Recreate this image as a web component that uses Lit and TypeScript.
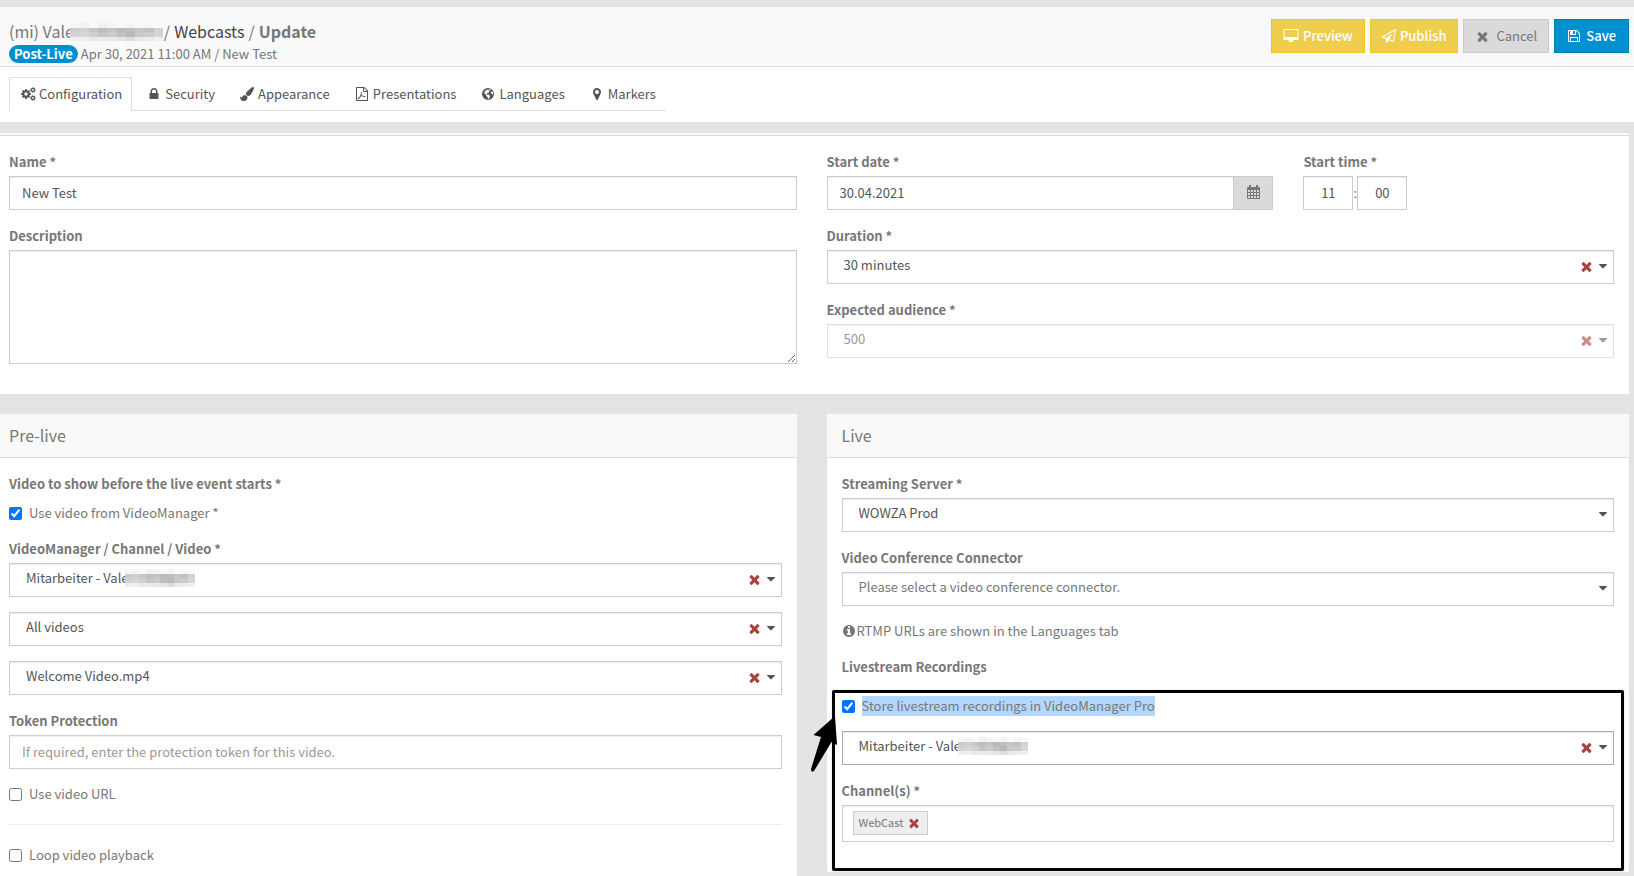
import { LitElement, html, css, svg, nothing } from "lit";
import { customElement, property } from "lit/decorators.js";

/* Builds the outline of a cog wheel with a round hole. */
function gear(cx: number, cy: number, outer: number, inner: number, hole: number, teeth: number): string {
  const step = (Math.PI * 2) / teeth;
  const at = (r: number, a: number) => `${(cx + r * Math.cos(a)).toFixed(1)} ${(cy + r * Math.sin(a)).toFixed(1)}`;
  let d = "";
  for (let i = 0; i < teeth; i++) {
    const a = i * step;
    d += `${i ? "L" : "M"}${at(inner, a - step * 0.32)}L${at(outer, a - step * 0.2)}L${at(outer, a + step * 0.2)}L${at(inner, a + step * 0.32)}`;
  }
  return `${d}ZM${cx + hole} ${cy}a${hole} ${hole} 0 1 0 ${-2 * hole} 0a${hole} ${hole} 0 1 0 ${2 * hole} 0Z`;
}

/* Day cells of the calendar sheet, punched out of its body. */
const dayCells = [5, 8, 11].map((y) => [1, 4, 7, 10].map((x) => `M${x} ${y}h2v2h-2z`).join("")).join("");

const ICONS: Record<string, { box?: string; w?: number; d: string }> = {
  times: {
    d: "M1490 1322q0 40-28 68l-136 136q-28 28-68 28t-68-28l-294-294-294 294q-28 28-68 28t-68-28l-136-136q-28-28-28-68t28-68l294-294-294-294q-28-28-28-68t28-68l136-136q28-28 68-28t68 28l294 294 294-294q28-28 68-28t68 28l136 136q28 28 28 68t-28 68l-294 294 294 294q28 28 28 68z",
  },
  lock: {
    d: "M640 768h512v-192q0-106-75-181t-181-75-181 75-75 181v192zm832 96v576q0 40-28 68t-68 28h-960q-40 0-68-28t-28-68v-576q0-40 28-68t68-28h32v-192q0-184 132-316t316-132 316 132 132 316v192h32q40 0 68 28t28 68z",
  },
  marker: {
    d: "M1152 640q0-106-75-181t-181-75-181 75-75 181 75 181 181 75 181-75 75-181zm256 0q0 109-33 179l-364 774q-16 33-47.5 52t-67.5 19-67.5-19-46.5-52l-365-774q-33-70-33-179 0-212 150-362t362-150 362 150 150 362z",
  },
  plane: {
    d: "M1764 11q33 24 27 64l-256 1536q-5 29-32 45-14 8-31 8-11 0-24-5l-527-215-298 327q-18 21-47 21-14 0-23-4-19-7-30-23.5t-11-36.5v-452l-472-193q-37-14-40-55-3-39 32-59l1664-960q35-21 68 2zm-342 1499l221-1323-1434 827 336 137 863-639-478 797z",
  },
  caret: {
    box: "384 640 1024 640",
    d: "M1408 704q0 26-19 45l-448 448q-19 19-45 19t-45-19l-448-448q-19-19-19-45t19-45 45-19h896q26 0 45 19t19 45z",
  },
  info: {
    d: "M1152 1376v-160q0-14-9-23t-23-9h-96v-512q0-14-9-23t-23-9h-320q-14 0-23 9t-9 23v160q0 14 9 23t23 9h96v320h-96q-14 0-23 9t-9 23v160q0 14 9 23t23 9h448q14 0 23-9t9-23zm-128-896v-160q0-14-9-23t-23-9h-192q-14 0-23 9t-9 23v160q0 14 9 23t23 9h192q14 0 23-9t9-23zm640 416q0 209-103 385.5t-279.5 279.5-385.5 103-385.5-103-279.5-279.5-103-385.5 103-385.5 279.5-279.5 385.5-103 385.5 103 279.5 279.5 103 385.5z",
  },
  floppy: {
    d: "M512 1536h768v-384h-768v384zm896 0h128v-896q0-14-10-38.5t-20-34.5l-281-281q-10-10-34-20t-39-10v416q0 40-28 68t-68 28h-576q-40 0-68-28t-28-68v-416h-128v1280h128v-416q0-40 28-68t68-28h832q40 0 68 28t28 68v416zm-384-928v-320q0-13-9.5-22.5t-22.5-9.5h-192q-13 0-22.5 9.5t-9.5 22.5v320q0 13 9.5 22.5t22.5 9.5h192q13 0 22.5-9.5t9.5-22.5zm640 32v928q0 40-28 68t-68 28h-1344q-40 0-68-28t-28-68v-1344q0-40 28-68t68-28h928q40 0 88 20t76 48l280 280q28 28 48 76t20 88z",
  },
  desktop: {
    box: "-64 0 1920 1792",
    w: 16,
    d: "M1728 992v-832q0-13-9.5-22.5t-22.5-9.5h-1600q-13 0-22.5 9.5t-9.5 22.5v832q0 13 9.5 22.5t22.5 9.5h1600q13 0 22.5-9.5t9.5-22.5zm128-832v1088q0 66-47 113t-113 47h-544q0 37 16 77.5t32 71 16 43.5q0 26-19 45t-45 19h-512q-26 0-45-19t-19-45q0-14 16-44t32-70 16-78h-544q-66 0-113-47t-47-113v-1088q0-66 47-113t113-47h1600q66 0 113 47t47 113z",
  },
  calendar: {
    box: "0 0 13 14",
    w: 13,
    d: `M2 0h2v2h5v-2h2v2h1q1 0 1 1v10q0 1-1 1h-11q-1 0-1-1v-10q0-1 1-1h1z${dayCells}`,
  },
  brush: {
    d: "M1615 0q70 0 122.5 46.5t52.5 116.5q0 63-45 151-332 629-465 752-97 91-218 91-126 0-216.5-92.5t-90.5-219.5q0-128 92-212l638-579q59-54 130-54zm-909 1034q39 76 106.5 130t150.5 76l1 71q4 213-129.5 347t-348.5 134q-123 0-218-46.5t-152.5-127.5-86.5-183-29-220q7 5 41 30t62 44.5 59 36.5 46 17q41 0 55-37 25-66 57.5-112.5t69.5-76 88-47.5 103-25.5 125-10.5z",
  },
  cogs: {
    box: "0 0 1920 1792",
    w: 15,
    d: gear(640, 896, 640, 490, 215, 8) + gear(1530, 384, 360, 270, 115, 7) + gear(1530, 1408, 360, 270, 115, 7),
  },
  pdf: {
    d: "M1596 380q28 28 48 76t20 88v1152q0 40-28 68t-68 28h-1344q-40 0-68-28t-28-68v-1600q0-40 28-68t68-28h896q40 0 88 20t76 48zm-444-244v376h376q-10-29-22-41l-313-313q-12-12-41-22zm384 1528v-1024h-416q-40 0-68-28t-28-68v-416h-768v1536h1280zM780 640q50-20 80 30q25 120-15 270q70 150 180 215q190-30 300 15q70 60 5 115q-130 30-325-60q-170 20-345 80q-140 240-240 275q-90 10-85-70q30-110 225-220q110-190 190-380q-50-190 30-270zM845 1060q-50 120-105 215q120-45 220-60q-75-70-115-155z",
  },
  globe: {
    d: "M896 128a768 768 0 1 0 0 1536a768 768 0 1 0 0-1536zM1040 260q120 20 220 95l-80 70-120-20-60 110 90 60-70 130-150 30-60 110-100 20 30 90 110 30 100-10 170 110 40 130-100 150-60 150-90 60q-70-120-60-290l-150-140-50-160-160-120-70-170q90-220 310-350l150 20 40 50 60-20zM1350 600l110-30q80 120 90 260l-40 150-90-30-50-110-110-60 10-130z",
  },
};

const icon = (name: string, size = 14, cls = "icon") => {
  const i = ICONS[name];
  return html`<svg class=${cls} width=${i.w ?? size} height=${name === "caret" ? 5 : size}
    viewBox=${i.box ?? "0 0 1792 1792"} aria-hidden="true"><path fill="currentColor" fill-rule="evenodd" d=${i.d}></path></svg>`;
};

/* Pixelated strip that hides the rest of a person's name. */
const MOSAIC: string[][] = [
  ["#f6f6f6", "#f2f2f2", "#f8f8f8", "#f1f1f1", "#f5f5f5", "#f8f8f8", "#f4f4f4", "#f9f9f9", "#f6f6f6", "#f9f9f9"],
  ["#cccccc", "#d0d0d0", "#c6c6c6", "#bcbcbc", "#c4c4c4", "#b9b9b9", "#bebebe", "#c6c6c6", "#c0c0c0", "#d2d2d2"],
  ["#d2d2d2", "#d6d6d6", "#d0d0d0", "#c4c4c4", "#cccccc", "#c0c0c0", "#b9b9b9", "#c8c8c8", "#cccccc", "#d6d6d6"],
  ["#eeeeee", "#f0f0f0", "#eaeaea", "#ececec", "#e8e8e8", "#e6e6e6", "#dcdcdc", "#e8e8e8", "#ececec", "#f0f0f0"],
];
const mosaic = (width: number, height: number) => html`<svg class="mosaic" width=${width} height=${height}
  viewBox="0 0 10 4" preserveAspectRatio="none" shape-rendering="crispEdges" aria-hidden="true">
  ${MOSAIC.map((row, y) => row.map((c, x) => svg`<rect x=${x} y=${y} width="1" height="1" fill=${c}></rect>`))}</svg>`;

const shared = css`
  * { box-sizing: border-box; }
  svg { display: block; flex: none; }
  button, input, select, textarea { font: inherit; color: inherit; margin: 0; border-radius: 0; }
`;

@customElement("select-box")
export class SelectBox extends LitElement {
  @property() label = "";
  @property() value = "";
  @property({ type: Boolean }) clearable = false;
  @property({ type: Boolean }) masked = false;
  @property({ type: Boolean, reflect: true }) disabled = false;
  @property({ type: Boolean, reflect: true }) muted = false;
  @property({ type: Boolean, reflect: true }) strong = false;
  @property({ type: Boolean }) hidelabel = false;

  static styles = [shared, css`
    :host { display: block; }
    .label { display: block; font-weight: 700; padding-top: 1px; margin-bottom: 4px; }
    .box {
      position: relative; display: flex; align-items: center; gap: 5px; height: 34px; padding: 0 6px 1px 0;
      border: 1px solid #ccc; background: #fff; box-shadow: inset 0 1px 1px rgba(0, 0, 0, 0.075); color: #555;
    }
    :host([strong]) .box { border-color: #aaa; }
    :host([muted]) .box { color: #777; }
    :host([disabled]) .box { opacity: 0.6; }
    select {
      appearance: none; flex: 1; min-width: 0; height: 31px; padding: 0 0 3px 16px; border: 0;
      background: none; outline: none; opacity: 1;
    }
    .clear { display: flex; padding: 0; border: 0; background: none; color: #a94442; }
    .mask { position: absolute; left: 115px; top: 5px; }
    .caret { color: #555; }
  `];

  render() {
    return html`
      ${this.hidelabel ? nothing : html`<label class="label" for="field">${this.label}</label>`}
      <div class="box">
        <select id="field" aria-label=${this.label} ?disabled=${this.disabled}><option>${this.value}</option></select>
        ${this.masked ? html`<span class="mask">${mosaic(70, 18)}</span>` : nothing}
        ${this.clearable ? html`<button class="clear" aria-label="Clear" ?disabled=${this.disabled}>${icon("times", 15)}</button>` : nothing}
        ${icon("caret", 8, "caret")}
      </div>`;
  }
}

@customElement("app-root")
export class AppRoot extends LitElement {
  static styles = [shared, css`
    :host {
      display: flex; flex-direction: column; min-height: 100vh; overflow: hidden; padding-top: 7px;
      background: #e4e4e4; color: #777;
      font: 13px/20px "Noto Sans CJK SC", "Open Sans", sans-serif;
    }
    .top {
      display: flex; justify-content: space-between; align-items: flex-start; gap: 20px;
      padding: 12px 5px 2px 9px; background: #f9f9f9; border-bottom: 1px solid #ddd;
    }
    .crumbs { display: flex; align-items: center; gap: 4px; margin: 0; font-size: 16px; line-height: 25px; font-weight: 400; }
    .crumbs a { color: #444; text-decoration: none; }
    .crumbs .owner { display: flex; align-items: center; }
    .crumbs .mosaic { margin: 0 -3px 0 -4px; }
    .crumbs strong { font-weight: 700; }
    .meta { display: flex; align-items: center; gap: 3px; }
    .badge { padding: 0 5px; border-radius: 9px; background: #0090d0; color: #fff; font-weight: 700; line-height: 18px; }
    .actions { display: flex; gap: 5px; }
    .btn {
      display: flex; align-items: center; justify-content: center; gap: 4px; height: 34px; padding: 0 11px;
      border: 1px solid #eac62f; background: #efcd4d; color: #fff; font-weight: 500; white-space: nowrap;
    }
    .btn.cancel { gap: 6px; border-color: #ccc; background: #dadada; color: #777; font-weight: 400; }
    .btn.save { gap: 5px; padding: 0 12px; border-color: #007eb6; background: #0090d0; }
    .tabbar { padding: 10px 9px 11px; background: #fff; }
    .tabs { display: inline-flex; gap: 3px; vertical-align: top; border-bottom: 1px solid #ddd; }
    .tab {
      display: flex; align-items: center; gap: 2px; height: 33px; padding: 0 9px;
      border: 1px solid transparent; border-bottom: 0; color: #555; text-decoration: none;
    }
    .tab.active { height: 34px; margin-bottom: -1px; border-color: #ddd; background: #fff; padding-bottom: 1px; }
    .slot { display: flex; justify-content: center; width: 18px; }

    main { display: flex; flex-direction: column; flex: 1; margin: 11px 5px 0 -6px; }
    .panel { background: #fff; }
    .strip { height: 3px; background: #f9f9f9; border-bottom: 1px solid #ddd; }
    .body { display: flex; flex-direction: column; gap: 15px; padding: 15px; }
    .halves { display: grid; grid-template-columns: 1fr 1fr; gap: 30px; }
    .general .body { padding-bottom: 30px; }
    .column { display: flex; flex-direction: column; gap: 15px; min-width: 0; }
    .when { display: grid; grid-template-columns: repeat(12, 1fr); column-gap: 30px; }
    .date { grid-column: span 7; }
    .time { grid-column: span 5; margin: 0; padding: 0; border: 0; }
    .label { display: block; margin: 0 0 4px; padding: 1px 0 0; font-size: 13px; line-height: 20px; font-weight: 700; }
    .control {
      display: block; width: 100%; height: 34px; padding: 0 12px 2px; border: 1px solid #ccc; background: #fff;
      box-shadow: inset 0 1px 1px rgba(0, 0, 0, 0.075); color: #555; outline: none;
    }
    .control::placeholder { color: #999; }
    textarea.control { height: 114px; padding: 6px 12px; }
    .group { display: flex; }
    .addon {
      display: flex; align-items: center; justify-content: center; width: 40px; flex: none; margin-left: -1px;
      padding: 0 0 2px; border: 1px solid #ccc; background: #dadada; color: #777;
    }
    .clock { display: flex; align-items: center; }
    .clock .control { width: 50px; text-align: center; padding: 0 0 2px; }
    .clock span { width: 4px; }

    .events { flex: 1; padding-top: 20px; }
    .live { align-self: start; }
    .heading {
      margin: 0; padding: 0 15px; height: 44px; border-bottom: 1px solid #ddd; background: #f9f9f9;
      font-size: 16px; line-height: 43px; font-weight: 400;
    }
    .check { display: flex; align-items: center; }
    .check input { width: 13px; height: 13px; margin: 0 7px 0 0; accent-color: #0075ff; }
    .check.first { margin-top: -5px; }
    .rule { width: 100%; margin: 5px 0; border: 0; border-top: 1px solid #eee; }
    .note { display: flex; align-items: center; gap: 1px; margin: 0; }
    .heading-small { margin: 0 0 -1px; padding-top: 1px; font-size: 13px; line-height: 20px; font-weight: 700; }
    .recording { position: relative; display: flex; flex-direction: column; gap: 15px; margin-top: 5px; padding-bottom: 15px; }
    .frame {
      position: absolute; inset: -6px -10px -14px -10px; border: 3px solid #000; border-radius: 2px;
      box-shadow: 0 0 1px rgba(0, 0, 0, 0.5); pointer-events: none;
    }
    .arrow { position: absolute; left: -32px; top: 20px; pointer-events: none; }
    mark { background: #b3d7ff; color: inherit; }
    .tags {
      display: flex; align-items: flex-start; height: 37px; padding: 5px 10px; border: 1px solid #ccc;
      box-shadow: inset 0 1px 1px rgba(0, 0, 0, 0.075);
    }
    .tag {
      display: flex; align-items: center; gap: 4px; height: 24px; padding: 0 6px 2px 5px; border: 1px solid #ccc;
      background: #eee; font-size: 11px;
    }
    .tag button { display: flex; padding: 2px 0 0; border: 0; background: none; color: #a94442; }
  `];

  private tabs: [string, string][] = [
    ["cogs", "Configuration"],
    ["lock", "Security"],
    ["brush", "Appearance"],
    ["pdf", "Presentations"],
    ["globe", "Languages"],
    ["marker", "Markers"],
  ];

  private check(text: unknown, checked = false, cls = "") {
    return html`<label class="check ${cls}"><input type="checkbox" ?checked=${checked} />${text}</label>`;
  }

  render() {
    return html`
      <header class="top">
        <div>
          <h1 class="crumbs">
            <span class="owner">(mi) Vale${mosaic(93, 18)}</span><span>/</span><a href="#webcasts">Webcasts</a><span>/</span><strong>Update</strong>
          </h1>
          <div class="meta"><span class="badge">Post-Live</span><span>Apr 30, 2021 11:00 AM / New Test</span></div>
        </div>
        <div class="actions">
          <button class="btn">${icon("desktop")}Preview</button>
          <button class="btn">${icon("plane")}Publish</button>
          <button class="btn cancel">${icon("times", 15)}Cancel</button>
          <button class="btn save">${icon("floppy")}Save</button>
        </div>
      </header>
      <div class="tabbar">
        <nav class="tabs">
          ${this.tabs.map(([name, text], i) => html`<a class="tab ${i ? "" : "active"}" href="#${text.toLowerCase()}"><span class="slot">${icon(name)}</span>${text}</a>`)}
        </nav>
      </div>
      <main>
        <section class="panel general">
          <div class="strip"></div>
          <div class="body halves">
            <div class="column">
              <div><label class="label" for="name">Name *</label><input class="control" id="name" .value=${"New Test"} /></div>
              <div><label class="label" for="description">Description</label><textarea class="control" id="description"></textarea></div>
            </div>
            <div class="column">
              <div class="when">
                <div class="date">
                  <label class="label" for="date">Start date *</label>
                  <div class="group">
                    <input class="control" id="date" .value=${"30.04.2021"} />
                    <button class="addon" aria-label="Open calendar">${icon("calendar")}</button>
                  </div>
                </div>
                <fieldset class="time">
                  <legend class="label">Start time *</legend>
                  <div class="clock">
                    <input class="control" aria-label="Hours" .value=${"11"} /><span>:</span><input class="control" aria-label="Minutes" .value=${"00"} />
                  </div>
                </fieldset>
              </div>
              <select-box label="Duration *" value="30 minutes" clearable></select-box>
              <select-box label="Expected audience *" value="500" clearable disabled></select-box>
            </div>
          </div>
        </section>
        <div class="events halves">
          <section class="panel">
            <h2 class="heading">Pre-live</h2>
            <div class="body">
              <h3 class="heading-small">Video to show before the live event starts *</h3>
              ${this.check("Use video from VideoManager *", true, "first")}
              <select-box label="VideoManager / Channel / Video *" value="Mitarbeiter - Vale" clearable masked></select-box>
              <select-box label="Channel" value="All videos" clearable hidelabel></select-box>
              <select-box label="Video" value="Welcome Video.mp4" clearable hidelabel></select-box>
              <div>
                <label class="label" for="token">Token Protection</label>
                <input class="control" id="token" placeholder="If required, enter the protection token for this video." />
              </div>
              ${this.check("Use video URL")}
              <hr class="rule" />
              ${this.check("Loop video playback")}
            </div>
          </section>
          <section class="panel live">
            <h2 class="heading">Live</h2>
            <div class="body">
              <select-box label="Streaming Server *" value="WOWZA Prod"></select-box>
              <select-box label="Video Conference Connector" value="Please select a video conference connector." muted></select-box>
              <p class="note">${icon("info")}RTMP URLs are shown in the Languages tab</p>
              <h3 class="heading-small">Livestream Recordings</h3>
              <div class="recording">
                ${this.check(html`<mark>Store livestream recordings in VideoManager Pro</mark>`, true)}
                <select-box label="Recording VideoManager" value="Mitarbeiter - Vale" clearable masked strong hidelabel></select-box>
                <div>
                  <h3 class="label">Channel(s) *</h3>
                  <div class="tags"><span class="tag">WebCast<button aria-label="Remove WebCast">${icon("times")}</button></span></div>
                </div>
                <div class="frame"></div>
                <svg class="arrow" width="30" height="58" viewBox="0 0 30 58" aria-hidden="true">
                  <path d="M25 0L27 29L21.500 26L4 55Q1 57 1 53L11 21L3.500 19Z" fill="#000"></path>
                </svg>
              </div>
            </div>
          </section>
        </div>
      </main>`;
  }
}
